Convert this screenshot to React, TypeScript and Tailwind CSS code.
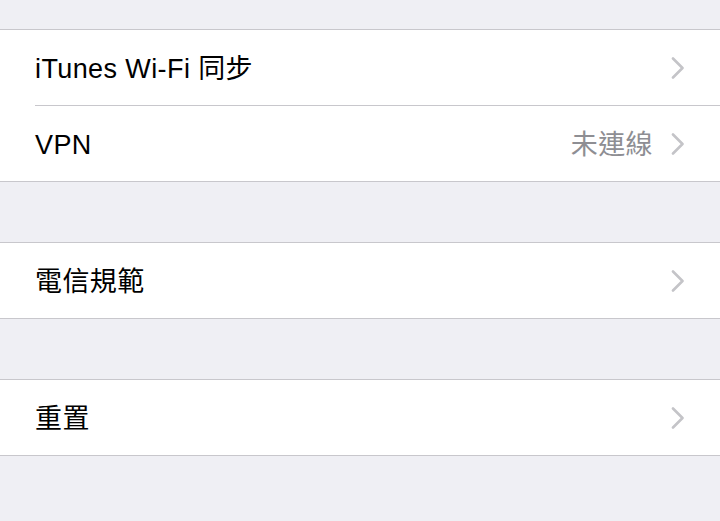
const font = {
  fontFamily: '"Liberation Sans", "Noto Sans CJK TC", sans-serif',
};

function Chevron() {
  return (
    <svg width="14" height="22" viewBox="0 0 14 22" fill="none" className="shrink-0">
      <path
        d="M2 1.5 L11.5 11 L2 20.5"
        stroke="#c4c4c8"
        strokeWidth="2.6"
        strokeLinecap="round"
        strokeLinejoin="round"
      />
    </svg>
  );
}

function Row({ label, value }: { label: string; value?: string }) {
  return (
    <div className="flex h-[75px] items-center pr-[35px]">
      <span className="flex-1 pt-[3px] text-[27px] tracking-[0.4px] text-black">{label}</span>
      {value && (
        <span className="mr-[18px] pt-[3px] text-[27px] tracking-[0.4px] text-[#8e8e93]">{value}</span>
      )}
      <Chevron />
    </div>
  );
}

function Section({ children }: { children: React.ReactNode }) {
  return (
    <div className="border-y border-[#c8c7cc] bg-white pl-[35px]">
      {children}
    </div>
  );
}

export default function App() {
  return (
    <div className="h-[521px] w-[720px] overflow-hidden bg-[#efeff4]" style={font}>
      <div className="h-[29px]" />
      <Section>
        <div className="border-b border-[#c8c7cc]">
          <Row label="iTunes Wi-Fi 同步" />
        </div>
        <Row label="VPN" value="未連線" />
      </Section>
      <div className="h-[60px]" />
      <Section>
        <Row label="電信規範" />
      </Section>
      <div className="h-[60px]" />
      <Section>
        <Row label="重置" />
      </Section>
    </div>
  );
}
